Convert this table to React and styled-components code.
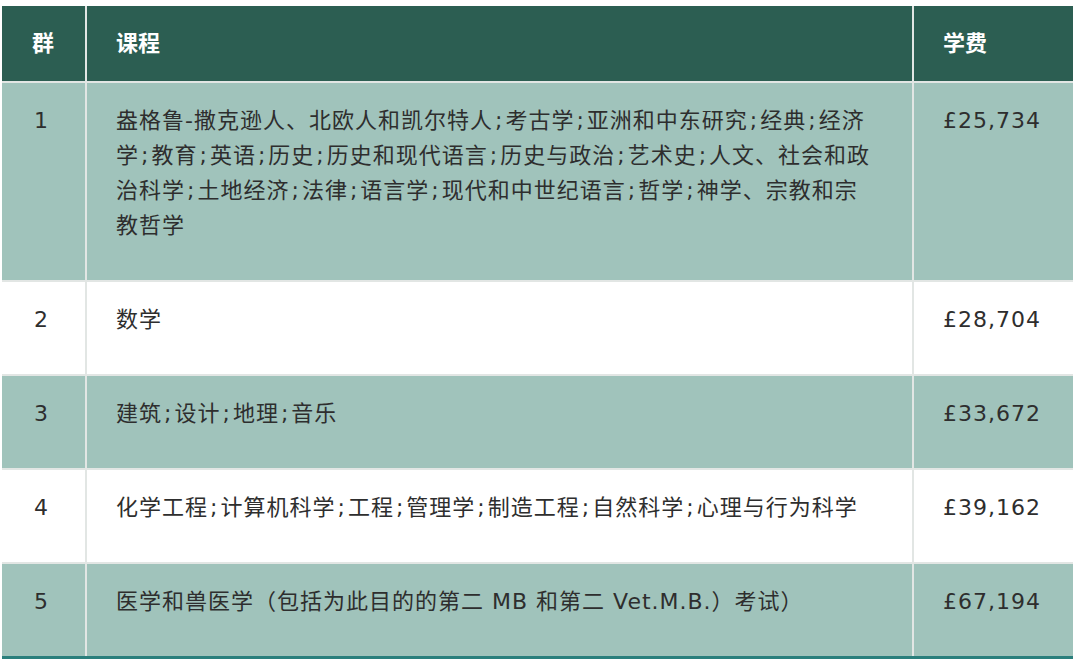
import React from "react"
import styled, { createGlobalStyle } from "styled-components"

const GlobalStyle = createGlobalStyle`
  html, body {
    margin: 0;
    padding: 0;
    background: #ffffff;
  }
  body {
    font-family: "DejaVu Sans", "Noto Sans CJK SC", sans-serif;
  }
`

const Page = styled.div`
  padding: 6px 0 0 2px;
`

const Table = styled.table`
  width: 1071px;
  border-collapse: collapse;
  table-layout: fixed;
`

const HeadCell = styled.th`
  background: #2c5e52;
  color: #ffffff;
  font-size: 22px;
  font-weight: bold;
  text-align: left;
  line-height: 35px;
  padding: 20px 28px 20px 29px;
  border: 2px solid #e2e6e4;
  border-top: none;
  &:first-child { border-left: none; padding-left: 30px; }
  &:last-child { border-right: none; }
`

const Row = styled.tr`
  background: ${(p) => (p.$shaded ? "#a0c3bb" : "#ffffff")};
`

const Cell = styled.td`
  vertical-align: top;
  color: #2e2e2e;
  font-size: 22px;
  line-height: 35px;
  letter-spacing: 1px;
  padding: 20px 10px 37px 29px;
  border: 2px solid #e2e6e4;
  border-bottom-color: ${(p) => (p.$last ? "#2a7f7c" : "#e2e6e4")};
  border-bottom-width: ${(p) => (p.$last ? "3px" : "2px")};
  &:first-child { border-left: none; padding-left: 32px; }
  &:last-child { border-right: none; }
`

const Courses = styled.div`
  width: 763px;
`

const Sep = styled.span`
  padding: 0 2px;
`

const rows = [
  {
    group: "1",
    courses:
      "盎格鲁-撒克逊人、北欧人和凯尔特人;考古学;亚洲和中东研究;经典;经济学;教育;英语;历史;历史和现代语言;历史与政治;艺术史;人文、社会和政治科学;土地经济;法律;语言学;现代和中世纪语言;哲学;神学、宗教和宗教哲学",
    fee: "£25,734",
  },
  { group: "2", courses: "数学", fee: "£28,704" },
  { group: "3", courses: "建筑;设计;地理;音乐", fee: "£33,672" },
  {
    group: "4",
    courses: "化学工程;计算机科学;工程;管理学;制造工程;自然科学;心理与行为科学",
    fee: "£39,162",
  },
  {
    group: "5",
    courses: "医学和兽医学（包括为此目的的第二 MB 和第二 Vet.M.B.）考试）",
    fee: "£67,194",
  },
]

const CourseList = ({ text }) => {
  const parts = text.split(";")
  return (
    <Courses>
      {parts.map((p, i) => (
        <React.Fragment key={i}>
          {p}
          {i < parts.length - 1 && <Sep>;</Sep>}
        </React.Fragment>
      ))}
    </Courses>
  )
}

const App = () => {
  return (
    <Page>
      <GlobalStyle />
      <Table>
        <colgroup>
          <col style={{ width: "84px" }} />
          <col style={{ width: "827px" }} />
          <col style={{ width: "160px" }} />
        </colgroup>
        <thead>
          <tr>
            <HeadCell>群</HeadCell>
            <HeadCell>课程</HeadCell>
            <HeadCell>学费</HeadCell>
          </tr>
        </thead>
        <tbody>
          {rows.map((r, i) => {
            const last = i === rows.length - 1
            return (
              <Row key={r.group} $shaded={i % 2 === 0}>
                <Cell $last={last}>{r.group}</Cell>
                <Cell $last={last}>
                  <CourseList text={r.courses} />
                </Cell>
                <Cell $last={last}>{r.fee}</Cell>
              </Row>
            )
          })}
        </tbody>
      </Table>
    </Page>
  )
}

export default App
